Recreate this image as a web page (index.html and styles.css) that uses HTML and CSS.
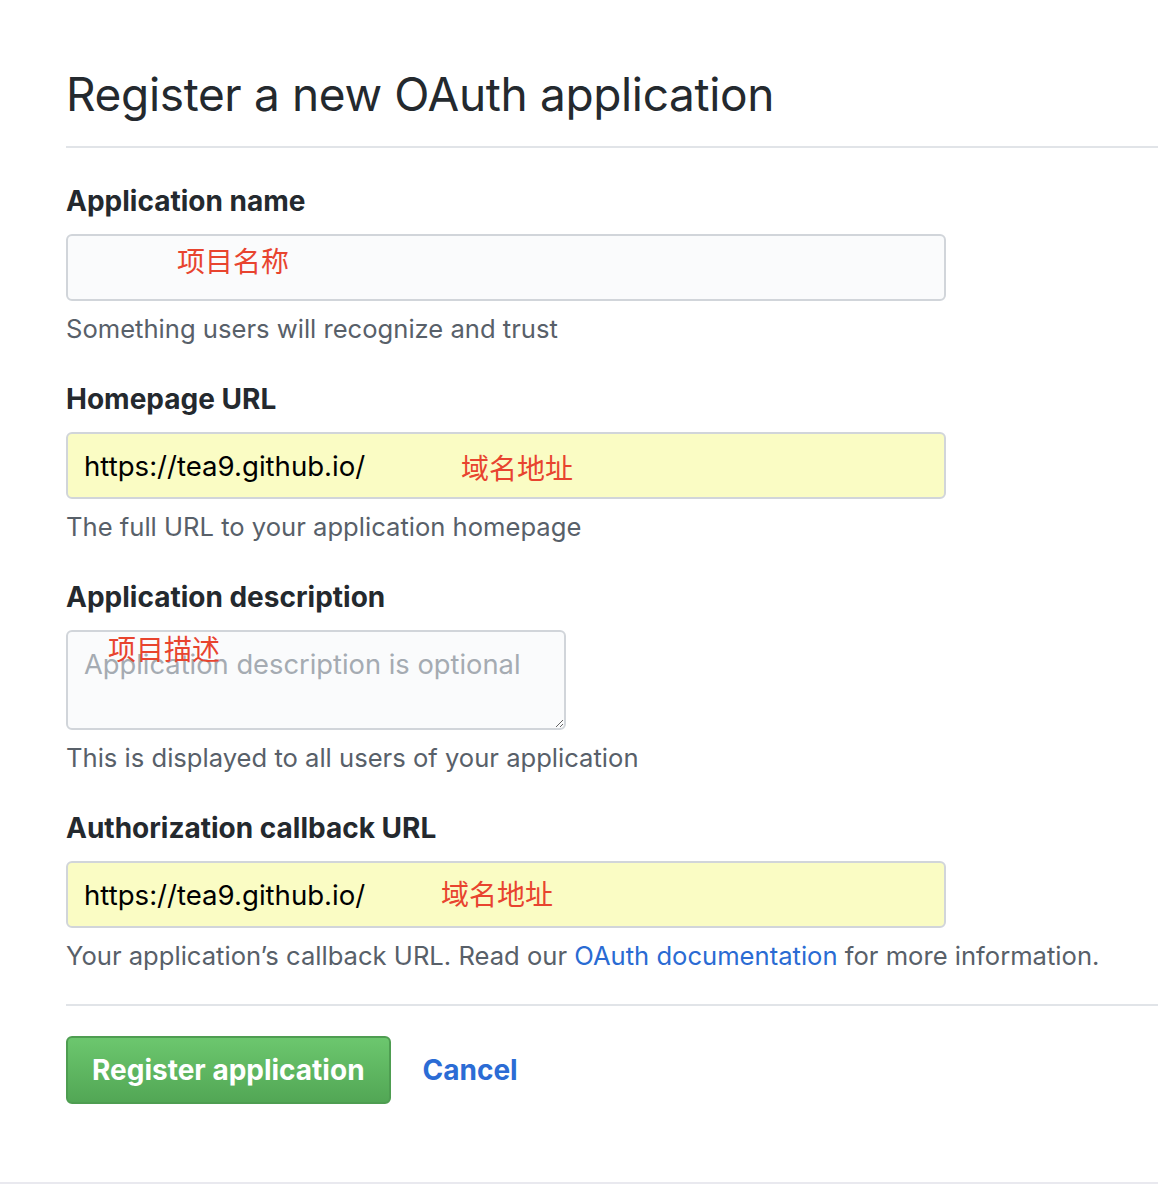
FILE: index.html
```html
<!DOCTYPE html>
<html lang="en">
<head>
<meta charset="utf-8">
<title>Register a new OAuth application</title>
<link rel="stylesheet" href="styles.css">
</head>
<body>
<div class="page">
  <div class="page-header">
    <h1 class="title">Register a new OAuth application</h1>
  </div>
  <form class="form">
    <div class="group">
      <label class="label" for="name">Application name</label>
      <div class="field">
        <input class="control" id="name" type="text" value="">
        <span class="note-red red-name">项目名称</span>
      </div>
      <p class="note">Something users will recognize and trust</p>
    </div>
    <div class="group">
      <label class="label" for="home">Homepage URL</label>
      <div class="field">
        <input class="control filled" id="home" type="text" value="https://tea9.github.io/">
        <span class="note-red red-home">域名地址</span>
      </div>
      <p class="note">The full URL to your application homepage</p>
    </div>
    <div class="group">
      <label class="label" for="desc">Application description</label>
      <div class="field field-short">
        <textarea class="control area" id="desc" placeholder="Application description is optional"></textarea>
        <span class="note-red red-desc">项目描述</span>
      </div>
      <p class="note">This is displayed to all users of your application</p>
    </div>
    <div class="group">
      <label class="label" for="cb">Authorization callback URL</label>
      <div class="field">
        <input class="control filled" id="cb" type="text" value="https://tea9.github.io/">
        <span class="note-red red-cb">域名地址</span>
      </div>
      <p class="note">Your application’s callback URL. Read our <a class="link" href="#">OAuth documentation</a> for more information.</p>
    </div>
    <div class="actions">
      <button class="btn-primary" type="button">Register application</button>
      <a class="cancel" href="#">Cancel</a>
    </div>
  </form>
</div>
<div class="footer"></div>
</body>
</html>
```

FILE: styles.css
```css
html, body {
  margin: 0;
  padding: 0;
  background: #ffffff;
}
body {
  font-family: "Inter", "Noto Sans", "Liberation Sans", "Noto Sans CJK SC", sans-serif;
  color: #24292e;
}
.page {
  padding: 64px 0 0 66px;
}
.page-header {
  padding-bottom: 22px;
  border-bottom: 2px solid #e1e4e8;
}
.title {
  margin: 0;
  font-size: 46px;
  line-height: 60px;
  font-weight: 400;
  letter-spacing: -0.35px;
  color: #24292e;
}
.form {
  margin: 0;
}
.group {
  margin-top: 35px;
}
.group:first-child {
  margin-top: 36px;
}
.label {
  display: block;
  font-size: 28px;
  line-height: 35px;
  font-weight: 700;
  margin-bottom: 15px;
  color: #24292e;
}
.field {
  position: relative;
  width: 880px;
}
.field-short {
  width: 500px;
}
.control {
  box-sizing: border-box;
  display: block;
  width: 100%;
  height: 67px;
  margin: 0;
  padding: 0 16px;
  border: 2px solid #d1d5da;
  border-radius: 6px;
  background: #fafbfc;
  font-family: inherit;
  font-size: 27.6px;
  color: #000000;
  outline: none;
}
.filled {
  background: #fafcc4;
}
.area {
  height: 100px;
  padding: 14px 16px;
  line-height: 38px;
  font-size: 27.3px;
  resize: vertical;
}
.area::placeholder {
  color: #a5abb2;
}
.note-red {
  position: absolute;
  font-family: "Noto Sans CJK SC", sans-serif;
  font-size: 28px;
  line-height: 30px;
  color: #e8442f;
  pointer-events: none;
}
.red-name { left: 111px; top: 11px; }
.red-home { left: 395px; top: 20px; }
.red-desc { left: 42px; top: 3px; }
.red-cb { left: 375px; top: 17px; }
.note {
  margin: 10px 0 0;
  font-size: 25.6px;
  line-height: 36px;
  color: #586069;
}
.link {
  color: #2a6bd3;
  text-decoration: none;
}
.actions {
  margin-top: 30px;
  padding-top: 30px;
  border-top: 2px solid #e1e4e8;
  display: flex;
  align-items: center;
  gap: 32px;
  padding-bottom: 78px;
}
.btn-primary {
  box-sizing: border-box;
  height: 68px;
  padding: 0 24px;
  border: 2px solid #4e9d51;
  border-radius: 6px;
  background: linear-gradient(#6cc76e, #52a755);
  color: #ffffff;
  font-family: inherit;
  font-size: 28px;
  font-weight: 700;
  cursor: pointer;
}
.cancel {
  font-size: 28px;
  font-weight: 700;
  color: #2b6cd5;
  text-decoration: none;
}
.footer {
  border-top: 2px solid #e9e9ef;
  height: 12px;
}
```
